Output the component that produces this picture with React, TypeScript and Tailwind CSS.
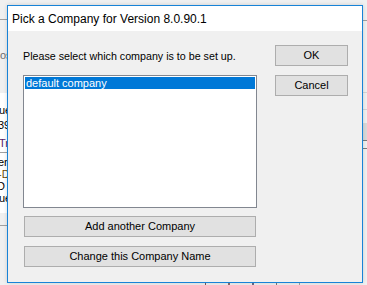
import React from 'react';

const font = { fontFamily: '"Liberation Sans", Arial, sans-serif' };

const WinButton = ({ label, className }: { label: string; className: string }) => (
  <button
    className={`flex items-center justify-center border border-[#adadad] bg-[#e1e1e1] text-[11px] text-black ${className}`}
  >
    {label}
  </button>
);

export default function App() {
  return (
    <div className="relative h-[285px] w-[367px] overflow-hidden bg-[#f0f0f0]" style={font}>
      {/* windows behind the dialog */}
      <div className="absolute left-0 top-0 flex h-full w-[8px] flex-col overflow-hidden bg-[#f0f0f0] text-[11px] leading-[12px]">
        <div className="h-[19px]" />
        <div className="h-px bg-[#a0a0a0]" />
        <div className="mt-[29px] whitespace-nowrap text-[#6d6d6d]">os</div>
        <div className="mt-[32px] h-[120px] bg-white">
          <div className="mt-[11px] -ml-[1px] whitespace-nowrap">ue</div>
          <div className="mt-[3px] -ml-[2px] whitespace-nowrap">39</div>
          <div className="mt-[6px] -ml-[1px] whitespace-nowrap text-[#5a1f6b]">Tr</div>
          <div className="mt-[3px] h-px bg-[#a0a0a0]" />
          <div className="mt-[3px] -ml-[2px] whitespace-nowrap">ers</div>
          <div className="-ml-[2px] whitespace-nowrap text-[#6b4a00]">-D</div>
          <div className="-ml-[3px] whitespace-nowrap">D</div>
          <div className="-ml-[1px] whitespace-nowrap">ue</div>
        </div>
        <div className="mt-[12px] h-px bg-[#a0a0a0]" />
      </div>
      <div className="absolute right-0 top-0 flex h-full w-[6px] flex-col bg-[#f0f0f0]">
        <div className="h-[20px]" />
        <div className="h-px bg-[#a0a0a0]" />
        <div className="mt-[71px] h-px bg-[#d4d4d4]" />
        <div className="mt-[16px] h-px bg-[#d4d4d4]" />
        <div className="mt-[13px] h-[17px] bg-[#d9d9d9]" />
        <div className="h-px bg-[#7a7a7a]" />
        <div className="mt-[7px] h-px bg-[#7a7a7a]" />
      </div>
      <div className="absolute bottom-0 left-[200px] flex h-[3px] w-[160px] gap-[22px]">
        <div className="ml-[5px] w-px bg-[#7a5a5a]" />
        <div className="w-[2px] bg-[#8a6a6a]" />
        <div className="w-[2px] bg-[#6a6a8a]" />
        <div className="w-px bg-[#7a7a7a]" />
        <div className="w-px bg-[#a0a0a0]" />
      </div>

      {/* dialog window */}
      <div className="absolute left-[7px] top-[5px] flex h-[278px] w-[356px] flex-col border border-[#1883d7] bg-[#f0f0f0] shadow-[0_0_4px_rgba(0,0,0,0.15)]">
        <div className="flex h-[25px] items-center bg-white pl-[4px] text-[12px] text-black">
          Pick a Company for Version 8.0.90.1
        </div>
        <div className="flex gap-[18px] pl-[15px] pt-[14px]">
          <div className="flex w-[234px] flex-col">
            <div className="mt-[4px] h-[14px] whitespace-nowrap text-[10.7px] leading-[14px] text-black">
              Please select which company is to be set up.
            </div>
            <div className="mt-[12px] h-[133px] border border-[#828790] bg-white p-px">
              <div className="h-[12px] bg-[#0078d7] pl-[1px] text-[11px] leading-[12px] text-white">
                default company
              </div>
            </div>
            <WinButton label="Add another Company" className="ml-px mt-[8px] h-[21px] w-[232px]" />
            <WinButton label="Change this Company Name" className="ml-px mt-[9px] h-[21px] w-[232px]" />
          </div>
          <div className="flex flex-col gap-[9px]">
            <WinButton label="OK" className="h-[21px] w-[73px]" />
            <WinButton label="Cancel" className="h-[21px] w-[73px]" />
          </div>
        </div>
      </div>
    </div>
  );
}
